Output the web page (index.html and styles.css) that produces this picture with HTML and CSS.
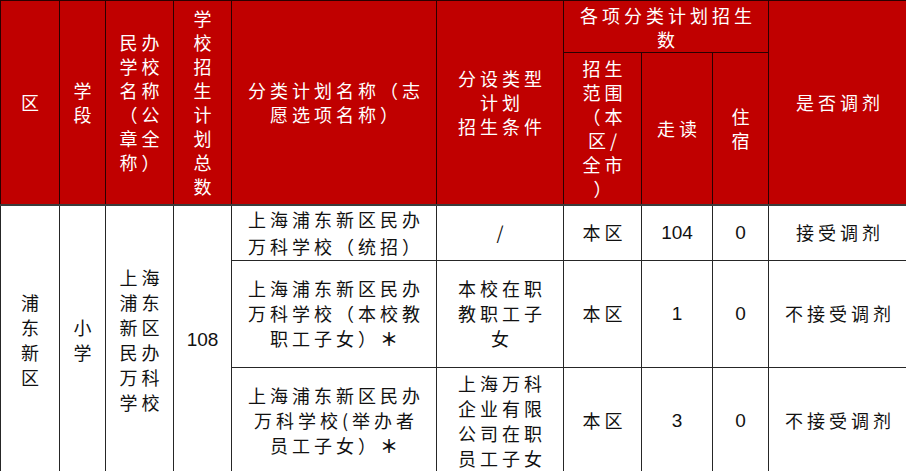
FILE: index.html
```html
<!DOCTYPE html>
<html lang="zh">
<head>
<meta charset="utf-8">
<link rel="stylesheet" href="styles.css">
<title>招生计划</title>
</head>
<body>
<table class="plan">
  <colgroup>
    <col class="c1"><col class="c2"><col class="c3"><col class="c4"><col class="c5">
    <col class="c6"><col class="c7"><col class="c8"><col class="c9"><col class="c10">
  </colgroup>
  <thead>
    <tr class="h-top">
      <th rowspan="2">区</th>
      <th rowspan="2">学段</th>
      <th rowspan="2">民办<br>学校<br>名称<br>（公<br>章全<br>称）</th>
      <th rowspan="2">学校招生计划总数</th>
      <th rowspan="2">分类计划名称（志<br>愿选项名称）</th>
      <th rowspan="2">分设类型<br>计划<br>招生条件</th>
      <th colspan="3">各项分类计划招生<br>数</th>
      <th rowspan="2">是否调剂</th>
    </tr>
    <tr class="h-sub">
      <th>招生<br>范围<br>（本<br>区/<br>全市<br>）</th>
      <th>走读</th>
      <th>住宿</th>
    </tr>
  </thead>
  <tbody>
    <tr class="r1">
      <td rowspan="3">浦东新区</td>
      <td rowspan="3">小学</td>
      <td rowspan="3">上海<br>浦东<br>新区<br>民办<br>万科<br>学校</td>
      <td rowspan="3" class="num">108</td>
      <td class="tight">上海浦东新区民办<br>万科学校（统招）</td>
      <td>/</td>
      <td>本区</td>
      <td class="num">104</td>
      <td class="num">0</td>
      <td>接受调剂</td>
    </tr>
    <tr class="r2">
      <td>上海浦东新区民办<br>万科学校（本校教<br>职工子女）<span class="star">＊</span></td>
      <td>本校在职<br>教职工子<br>女</td>
      <td>本区</td>
      <td class="num">1</td>
      <td class="num">0</td>
      <td>不接受调剂</td>
    </tr>
    <tr class="r3">
      <td>上海浦东新区民办<br>万科学校(举办者<br>员工子女）<span class="star">＊</span></td>
      <td>上海万科<br>企业有限<br>公司在职<br>员工子女</td>
      <td>本区</td>
      <td class="num">3</td>
      <td class="num">0</td>
      <td>不接受调剂</td>
    </tr>
  </tbody>
</table>
</body>
</html>
```

FILE: styles.css
```css
html, body {
  margin: 0;
  padding: 0;
  background: #ffffff;
}

.plan {
  width: 907px;
  table-layout: fixed;
  border-collapse: collapse;
  font-family: "Noto Sans CJK SC", "Noto Sans", sans-serif;
  font-size: 18px;
  letter-spacing: 4px;
}

.c1 { width: 59px; }
.c2 { width: 46px; }
.c3 { width: 68px; }
.c4 { width: 58px; }
.c5 { width: 205px; }
.c6 { width: 127px; }
.c7 { width: 78px; }
.c8 { width: 71px; }
.c9 { width: 56px; }
.c10 { width: 139px; }

.plan th,
.plan td {
  border: 1px solid #262626;
  padding: 0 8px 0 12px;
  text-align: center;
  vertical-align: middle;
  overflow: hidden;
}

.plan th {
  background: #c00000;
  color: #ffffff;
  font-weight: 400;
  line-height: 24px;
  border-color: #2a0000;
}

.plan thead tr.h-sub th {
  border-bottom: 2px solid #3c3c3c;
}

.plan thead tr.h-top th[rowspan] {
  border-bottom: 2px solid #3c3c3c;
}

.plan td {
  color: #111111;
  line-height: 25px;
}

.plan td.tight {
  line-height: 27px;
}

.plan .star {
  font-weight: 700;
}

.plan .num {
  font-family: "Liberation Sans", Arial, sans-serif;
  font-size: 19px;
  letter-spacing: 0;
  padding: 0 10px;
}

.h-top { height: 52px; }
.h-sub { height: 152px; }
.r1 { height: 52px; }
.r2 { height: 107px; }
.r3 { height: 107px; }

.plan tbody tr.r3 td {
  border-bottom-color: #b0b0b0;
}
```
